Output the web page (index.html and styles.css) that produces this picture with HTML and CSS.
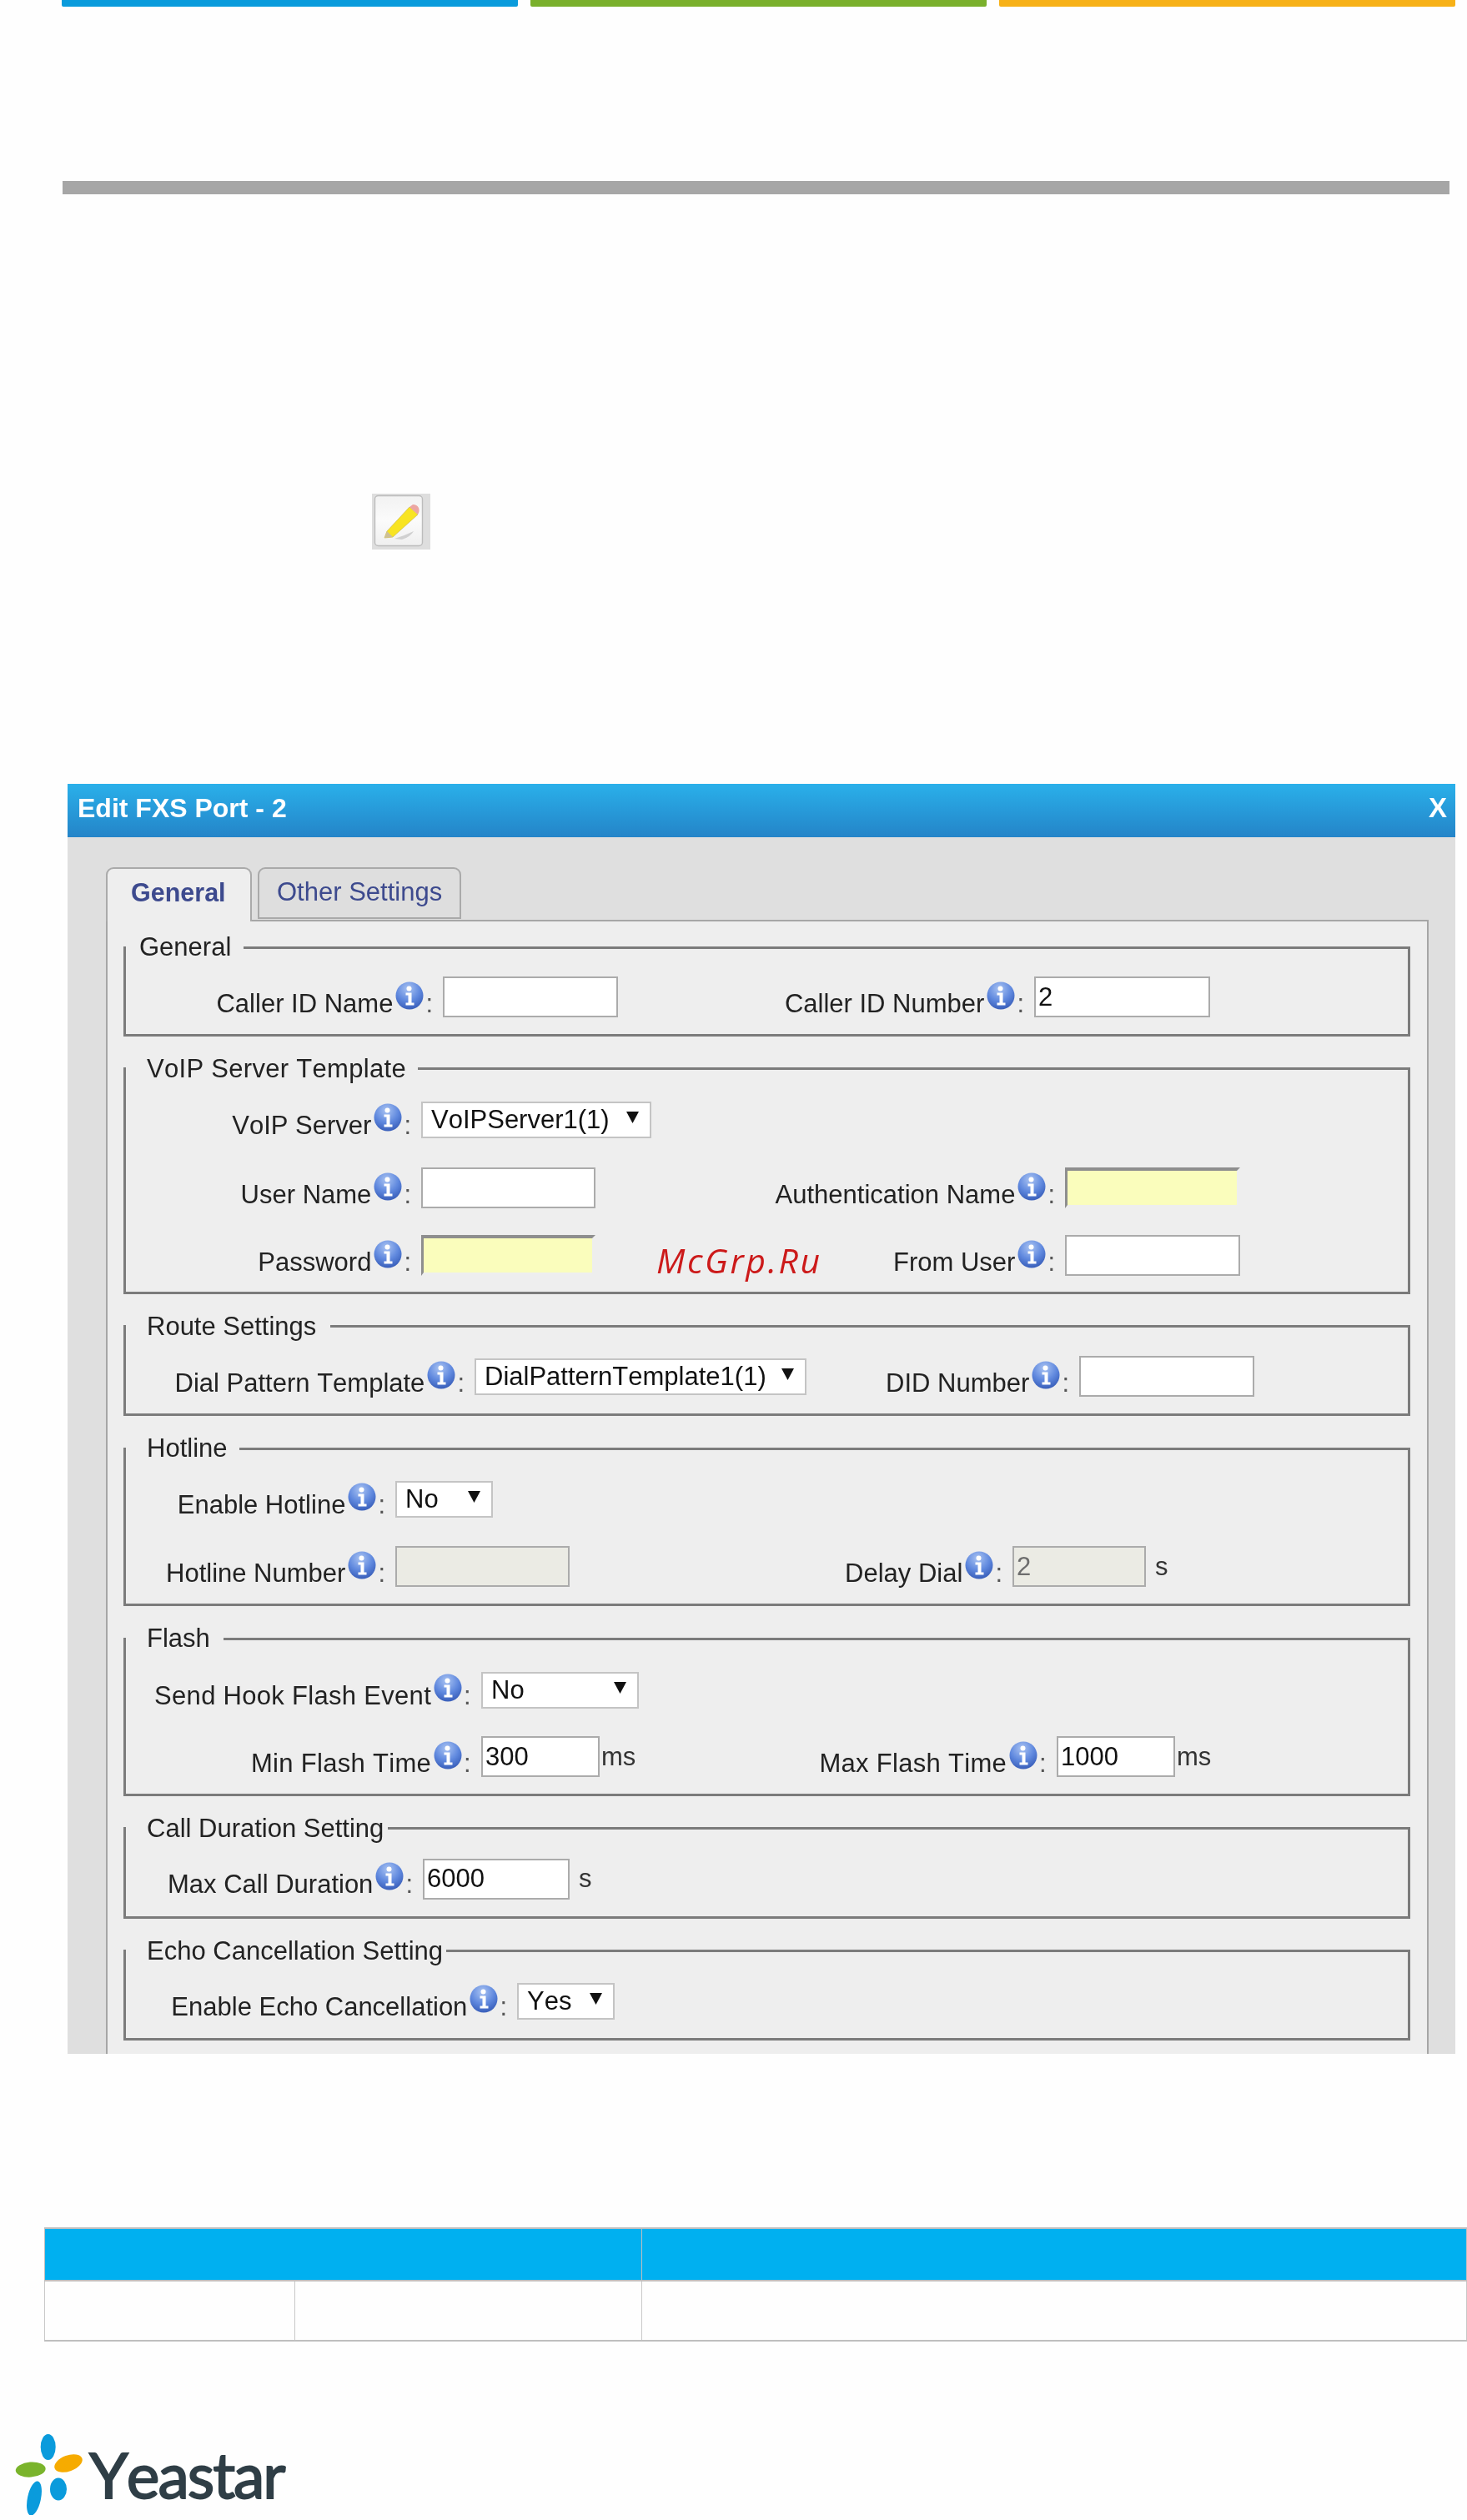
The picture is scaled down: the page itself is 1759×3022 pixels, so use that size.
FILE: index.html
```html
<!DOCTYPE html>
<html lang="en">
<head>
<meta charset="utf-8">
<title>Edit FXS Port</title>
<link rel="stylesheet" href="styles.css">
</head>
<body>
<svg class="defs" width="0" height="0" aria-hidden="true">
  <defs>
    <radialGradient id="infoFill" cx="45%" cy="25%" r="80%">
      <stop offset="0" stop-color="#a9c3f2"/>
      <stop offset=".55" stop-color="#5f88de"/>
      <stop offset="1" stop-color="#3358b4"/>
    </radialGradient>
    <symbol id="info" viewBox="0 0 34 34">
      <circle cx="17" cy="17" r="16.5" fill="url(#infoFill)"/>
      <circle cx="16.5" cy="8.5" r="3" fill="#fff"/>
      <path d="M12.5 13.5h7v12h3v3h-10v-3h3v-9h-3z" fill="#fff"/>
    </symbol>
    <symbol id="arrow" viewBox="0 0 15 14">
      <path d="M0 0h15L7.5 14z" fill="#111"/>
    </symbol>
  </defs>
</svg>

<div class="topbars">
  <div class="topbar blue"></div>
  <div class="topbar green"></div>
  <div class="topbar orange"></div>
</div>
<div class="rule"></div>

<div class="edit-icon">
  <svg width="70" height="67" viewBox="0 0 70 67">
    <defs>
      <linearGradient id="btnFill" x1="0" y1="0" x2="0" y2="1">
        <stop offset="0" stop-color="#f2f2f2"/>
        <stop offset=".5" stop-color="#fbfbfb"/>
        <stop offset="1" stop-color="#efefef"/>
      </linearGradient>
      <filter id="soft"><feGaussianBlur stdDeviation=".7"/></filter>
    </defs>
    <rect width="70" height="67" fill="#dedede"/>
    <g filter="url(#soft)">
      <rect x="3.5" y="2.5" width="57" height="60" rx="4" fill="url(#btnFill)" stroke="#bcbcbc" stroke-width="1.4"/>
      <path d="M27 54Q40 50 50 45Q46 52 36 55z" fill="#d0d0d0"/>
      <path d="M15 53L18 45L45 16L55 25L25 52z" fill="#f8e423" stroke="#cdbb4c" stroke-width=".7"/>
      <path d="M45 16L49 13Q54 13 56 17Q57.5 21 55 25z" fill="#eca6a2"/>
      <path d="M15 53L18 45L25 52z" fill="#cdbf98"/>
    </g>
  </svg>
</div>

<section class="dialog">
  <header class="dialog-title"><span>Edit FXS Port - 2</span><span class="close">X</span></header>
  <div class="dialog-body">
    <div class="tabs">
      <div class="tab tab-active">General</div>
      <div class="tab">Other Settings</div>
    </div>
    <div class="panel">

      <fieldset class="fs fs-general">
        <legend>General</legend>
        <div class="rows">
          <div class="lbl">Caller ID Name<svg class="ico"><use href="#info"/></svg><span class="colon">:</span></div>
          <input class="inp w210" type="text">
          <div class="lbl">Caller ID Number<svg class="ico"><use href="#info"/></svg><span class="colon">:</span></div>
          <input class="inp w211" type="text" value="2">
        </div>
      </fieldset>

      <fieldset class="fs fs-voip">
        <legend>VoIP Server Template</legend>
        <div class="rows">
          <div class="lbl lbl-sel">VoIP Server<svg class="ico"><use href="#info"/></svg><span class="colon">:</span></div>
          <div class="sel w276 sel-voip"><span>VoIPServer1(1)</span><svg class="arr"><use href="#arrow"/></svg></div>
          <div class="spacer"></div>
          <div class="spacer"></div>
          <div class="lbl">User Name<svg class="ico"><use href="#info"/></svg><span class="colon">:</span></div>
          <input class="inp w209" type="text">
          <div class="lbl">Authentication Name<svg class="ico"><use href="#info"/></svg><span class="colon">:</span></div>
          <input class="inp w210 required" type="text">
          <div class="lbl">Password<svg class="ico"><use href="#info"/></svg><span class="colon">:</span></div>
          <input class="inp w209 required" type="text">
          <div class="lbl">From User<svg class="ico"><use href="#info"/></svg><span class="colon">:</span></div>
          <input class="inp w210" type="text">
        </div>
        <div class="watermark">McGrp.Ru</div>
      </fieldset>

      <fieldset class="fs fs-route">
        <legend>Route Settings</legend>
        <div class="rows">
          <div class="lbl">Dial Pattern Template<svg class="ico"><use href="#info"/></svg><span class="colon">:</span></div>
          <div class="sel w398 sel-route"><span>DialPatternTemplate1(1)</span><svg class="arr"><use href="#arrow"/></svg></div>
          <div class="lbl">DID Number<svg class="ico"><use href="#info"/></svg><span class="colon">:</span></div>
          <input class="inp w210" type="text">
        </div>
      </fieldset>

      <fieldset class="fs fs-hotline">
        <legend>Hotline</legend>
        <div class="rows">
          <div class="lbl lbl-sel">Enable Hotline<svg class="ico"><use href="#info"/></svg><span class="colon">:</span></div>
          <div class="sel w117"><span>No</span><svg class="arr"><use href="#arrow"/></svg></div>
          <div class="spacer"></div>
          <div class="spacer"></div>
          <div class="lbl">Hotline Number<svg class="ico"><use href="#info"/></svg><span class="colon">:</span></div>
          <input class="inp w209" type="text" disabled>
          <div class="lbl">Delay Dial<svg class="ico"><use href="#info"/></svg><span class="colon">:</span></div>
          <div class="with-unit"><input class="inp w160" type="text" value="2" disabled><span class="unit unit-s">s</span></div>
        </div>
      </fieldset>

      <fieldset class="fs fs-flash">
        <legend>Flash</legend>
        <div class="rows">
          <div class="lbl lbl-sel">Send Hook Flash Event<svg class="ico"><use href="#info"/></svg><span class="colon">:</span></div>
          <div class="sel w189"><span>No</span><svg class="arr"><use href="#arrow"/></svg></div>
          <div class="spacer"></div>
          <div class="spacer"></div>
          <div class="lbl">Min Flash Time<svg class="ico"><use href="#info"/></svg><span class="colon">:</span></div>
          <div class="with-unit"><input class="inp w142" type="text" value="300"><span class="unit">ms</span></div>
          <div class="lbl">Max Flash Time<svg class="ico"><use href="#info"/></svg><span class="colon">:</span></div>
          <div class="with-unit"><input class="inp w142" type="text" value="1000"><span class="unit">ms</span></div>
        </div>
      </fieldset>

      <fieldset class="fs fs-call">
        <legend>Call Duration Setting</legend>
        <div class="rows">
          <div class="lbl lbl-sel">Max Call Duration<svg class="ico"><use href="#info"/></svg><span class="colon">:</span></div>
          <div class="with-unit"><input class="inp w176" type="text" value="6000"><span class="unit unit-s">s</span></div>
        </div>
      </fieldset>

      <fieldset class="fs fs-echo">
        <legend>Echo Cancellation Setting</legend>
        <div class="rows">
          <div class="lbl lbl-sel">Enable Echo Cancellation<svg class="ico"><use href="#info"/></svg><span class="colon">:</span></div>
          <div class="sel w117"><span>Yes</span><svg class="arr"><use href="#arrow"/></svg></div>
        </div>
      </fieldset>

    </div>
  </div>
</section>

<table class="spec">
  <colgroup><col class="c1"><col class="c2"><col class="c3"></colgroup>
  <thead>
    <tr><th colspan="2"></th><th></th></tr>
  </thead>
  <tbody>
    <tr><td></td><td></td><td></td></tr>
  </tbody>
</table>

<footer class="logo">
  <svg class="petals" width="84" height="98" viewBox="18 2917 84 98">
    <ellipse cx="57.7" cy="2933.5" rx="9" ry="15.5" fill="#0a9bdc"/>
    <ellipse cx="82" cy="2953" rx="17.5" ry="9.5" fill="#f6ab00" transform="rotate(-20 82 2953)"/>
    <ellipse cx="36.7" cy="2960.6" rx="18" ry="9" fill="#7ab42c" transform="rotate(-4 36.7 2960.6)"/>
    <ellipse cx="41" cy="2995" rx="8" ry="21" fill="#0a9bdc" transform="rotate(12 41 2995)"/>
    <ellipse cx="70" cy="2984" rx="10" ry="13.5" fill="#0a9bdc"/>
  </svg>
  <span class="brand">Yeastar</span>
</footer>
</body>
</html>
```

FILE: styles.css
```css
* { box-sizing: border-box; }
html, body { margin: 0; padding: 0; }
body {
  background: #fefefe;
  font-family: "Liberation Sans", Arial, sans-serif;
  font-kerning: none;
  color: #222;
  height: 3022px;
  overflow: hidden;
}
.defs { display: block; height: 0; }

/* page header */
.topbars { display: flex; gap: 15px; padding-left: 74px; }
.topbar { width: 547px; height: 8px; border-radius: 0 0 2px 2px; }
.blue { background: #0a9bdc; }
.green { background: #7ab02c; }
.orange { background: #f7b118; }
.rule { margin: 209px 0 0 75px; width: 1663px; height: 16px; background: #a6a6a6; }

.edit-icon { margin: 359px 0 0 446px; width: 70px; height: 67px; }
.edit-icon svg { display: block; }

/* dialog */
.dialog {
  margin: 281px 0 0 81px;
  width: 1664px;
  height: 1523px;
  overflow: hidden;
  background: #dfdfdf;
  font-size: 31px;
  filter: blur(.5px);
}
.dialog-title {
  height: 64px;
  display: flex;
  justify-content: space-between;
  align-items: center;
  padding: 0 10px 6px 12px;
  background: linear-gradient(#2ab0ea, #2484c8);
  color: #fff;
  font-weight: 700;
  font-size: 32px;
}
.close { font-size: 33px; }
.dialog-body { padding: 36px 32px 0 46px; }

.tabs { display: flex; gap: 7px; height: 63px; align-items: flex-start; }
.tab {
  width: 244px;
  height: 62px;
  padding-left: 21px;
  line-height: 56px;
  border: 2px solid #aaa;
  border-radius: 9px 9px 0 0;
  color: #3d4a8e;
  background: #dedede;
  white-space: nowrap;
}
.tab-active {
  width: 175px;
  height: 65px;
  padding-left: 28px;
  background: #eee;
  font-weight: 700;
  font-size: 30.5px;
  border-bottom: 0;
  position: relative;
  z-index: 1;
}

.panel {
  border: 2px solid #a6a6a6;
  border-bottom: 0;
  background: #eee;
  padding: 13px 20px 0 19px;
  min-height: 1400px;
}

/* fieldsets */
.fs {
  position: relative;
  margin: 0 0 21px;
  min-width: 0;
  border: 3px solid #7b7b7b;
  padding: 18px 0 20px;
}
.fs legend { padding: 0 14px 0 25px; line-height: 36px; white-space: nowrap; color: #222; }
.fs-general legend { padding: 0 15px 0 16px; }
.fs-voip legend { letter-spacing: .3px; }
.fs-route legend { padding-right: 17px; }
.fs-flash legend { padding-right: 16px; }
.fs-call legend { padding-right: 5px; }
.fs-echo legend { padding-right: 4px; }

.rows { display: grid; row-gap: 32px; align-items: start; }
.fs-general .rows { grid-template-columns: 380px 210px 499px 211px; }
.fs-voip .rows { grid-template-columns: 354px 209px 563px 210px; }
.fs-route .rows { grid-template-columns: 418px 398px 327px 210px; }
.fs-hotline .rows { grid-template-columns: 323px 209px 531px 209px; row-gap: 31px; }
.fs-flash .rows { grid-template-columns: 426px 142px 548px 209px; row-gap: 30px; }
.fs-call .rows { grid-template-columns: 356px 260px; }
.fs-echo .rows { grid-template-columns: 469px 117px; }

.fs-general { padding: 17px 0 19.5px; }
.fs-voip { padding: 19px 0 19px; }
.fs-route { padding: 17px 0 20.5px; }
.fs-hotline { padding: 19px 0 20px; }
.fs-flash { padding: 20px 0 19.5px; }
.fs-echo { padding: 18px 0 19px; }

.lbl {
  display: flex;
  justify-content: flex-end;
  align-items: flex-start;
  height: 49px;
  line-height: 51px;
  padding: 7px 12px 0 0;
  white-space: nowrap;
  color: #222;
}
.lbl-sel { padding-top: 5px; }
.fs-flash .lbl { letter-spacing: .3px; }
.ico { width: 34px; height: 34px; margin: -1px 0 0 3px; flex: none; }
.colon { margin-left: 2px; color: #555; }

.inp {
  display: block;
  height: 49px;
  padding: 0 3px;
  border: 2px solid #ababab;
  background: #fff;
  font: inherit;
  font-kerning: none;
  color: #111;
  border-radius: 0;
  outline: 0;
}
.inp.required {
  background: #fafdbc;
  border: 0;
  border-top: 4px solid #8e8e8e;
  border-left: 3px solid #8e8e8e;
  border-right: 4px solid #eee;
  border-bottom: 4px solid #eee;
}
.inp:disabled { background: #ebebe4; color: #6d6d6d; }

.w142 { width: 142px; }
.w160 { width: 160px; }
.w176 { width: 176px; }
.w209 { width: 209px; }
.w210 { width: 210px; }
.w211 { width: 211px; }
.w117 { width: 117px; }
.w189 { width: 189px; }
.w276 { width: 276px; }
.w398 { width: 398px; }

.sel {
  display: flex;
  justify-content: space-between;
  align-items: center;
  height: 44px;
  margin-top: 2px;
  padding: 0 13px 0 10px;
  background: #fff;
  border: 2px solid #c4c4c4;
  color: #111;
  white-space: nowrap;
}
.sel-route { margin-top: 3px; }
.arr { width: 15px; height: 14px; flex: none; margin-top: -6px; }

.with-unit { display: flex; align-items: center; height: 49px; white-space: nowrap; }
.unit { margin-left: 2px; color: #333; }
.unit-s { margin-left: 11px; }

.watermark {
  position: absolute;
  left: 636px;
  bottom: 10px;
  font-family: "Open Sans", sans-serif;
  font-style: italic;
  font-weight: 500;
  font-size: 41px;
  letter-spacing: 2.6px;
  color: #cc1a1a;
}

/* table */
.spec {
  margin: 208px 0 0 53px;
  width: 1705px;
  table-layout: fixed;
  border-collapse: collapse;
}
.c1 { width: 300px; }
.c2 { width: 416px; }
.c3 { width: 989px; }
.spec th {
  height: 63px;
  padding: 0;
  background: #00b0f0;
  border: 1px solid #bfbfbf;
  border-top: 2px solid #bfbfbf;
  border-bottom: 2px solid #bfbfbf;
}
.spec th + th { border-left: 1px solid #d9f2fc; }
.spec td {
  height: 72px;
  padding: 0;
  border: 1px solid #c8c8c8;
  border-bottom: 2px solid #bfbfbf;
}

/* logo */
.logo { display: flex; align-items: flex-start; margin-top: 110px; padding-left: 18px; height: 98px; }
.petals { flex: none; display: block; }
.brand {
  margin: 3px 0 0 5px;
  font-family: Lato, sans-serif;
  font-weight: 400;
  font-size: 75px;
  line-height: 92px;
  letter-spacing: -2px;
  -webkit-text-stroke: 1.8px #2f3e46;
  color: #2f3e46;
}
```
